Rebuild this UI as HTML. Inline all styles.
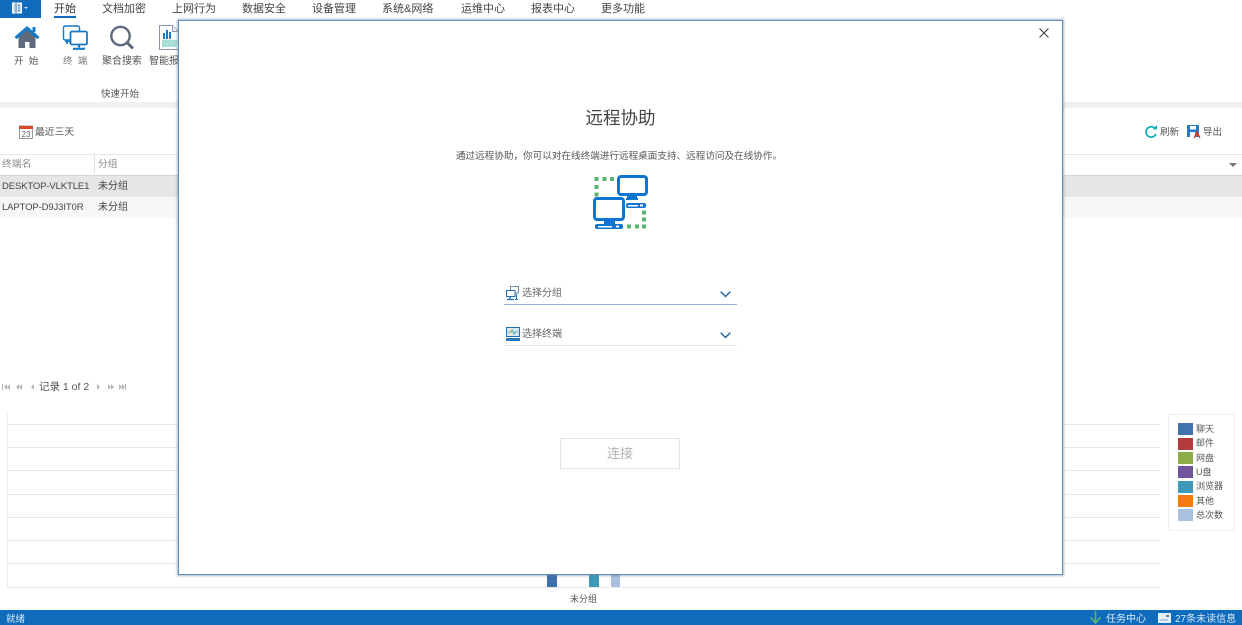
<!DOCTYPE html>
<html lang="zh-CN">
<head>
<meta charset="utf-8">
<title>远程协助</title>
<style>
html,body{margin:0;padding:0;width:1242px;height:625px;overflow:hidden;background:#fff}
body{position:relative;font-family:"Liberation Sans","Noto Sans CJK SC",sans-serif;color:#444;filter:blur(.3px)}
.a{position:absolute}
.t{position:absolute;white-space:nowrap;line-height:14px}
.tab{top:2px;font-size:11px;color:#444}
.rb{top:55px;font-size:10px;color:#555}
.h{position:absolute;left:7px;width:1153px;height:1px;background:#e9e9e9}
.sw{position:absolute;left:1178px;width:15px;height:12px}
.lg{left:1196px;font-size:9px;color:#555}
</style>
</head>
<body>
<!-- top bar -->
<div class="a" style="left:0;top:0;width:41px;height:18px;background:#0f6cbd"></div>
<svg class="a" style="left:11px;top:2px" width="20" height="12" viewBox="0 0 20 12"><rect x="1.500" y="1" width="9" height="10" fill="#cfe2f3" stroke="#fff"/><path d="M5 1v10M7 3.500h2M7 6h2M7 8.500h2" stroke="#3a80bd"/><path d="M13 5l2 2 2-2z" fill="#cfe2f3"/></svg>
<div class="t tab" style="left:54px;color:#333">开始</div>
<div class="a" style="left:54px;top:16px;width:22px;height:2px;background:#0f6cbd"></div>
<div class="t tab" style="left:102px">文档加密</div>
<div class="t tab" style="left:172px">上网行为</div>
<div class="t tab" style="left:242px">数据安全</div>
<div class="t tab" style="left:312px">设备管理</div>
<div class="t tab" style="left:382px">系统&amp;网络</div>
<div class="t tab" style="left:461px">运维中心</div>
<div class="t tab" style="left:531px">报表中心</div>
<div class="t tab" style="left:601px">更多功能</div>

<!-- ribbon icons -->
<svg class="a" style="left:14px;top:25px" width="26" height="24" viewBox="0 0 26 24"><path d="M4.500 11.500V23h6.500v-6h4.500v6h6V11.500L13 4.500z" fill="#5f6b7d"/><path d="M1.500 13 13 3l11.500 10" fill="none" stroke="#1878c8" stroke-width="3"/><rect x="18.500" y="2" width="3" height="5" fill="#1878c8"/></svg>
<svg class="a" style="left:62px;top:25px" width="27" height="26" viewBox="0 0 27 26" fill="none" stroke="#1878c8"><rect x="1.500" y="1" width="16" height="14" rx="1.500" stroke-width="1.400"/><rect x="8.500" y="6.500" width="16.500" height="13" rx="1.500" fill="#fff" stroke-width="1.800"/><path d="M17 19.500v3M11 23.800h12" stroke-width="2.200"/><path d="M3 16.500h5M5 15v4" stroke-width="1.600"/></svg>
<svg class="a" style="left:109px;top:25px" width="26" height="25" viewBox="0 0 26 25" fill="none" stroke="#5f6b7d"><circle cx="11.500" cy="11" r="9.200" stroke-width="2.400"/><path d="M18 17.500l6 6" stroke-width="3"/></svg>
<svg class="a" style="left:159px;top:25px" width="20" height="25" viewBox="0 0 20 25"><path d="M.5.500h13l6 6v18H.5z" fill="#fff" stroke="#8b97a5"/><path d="M13.500.500v6h6" fill="#eef" stroke="#8b97a5"/><rect x="4" y="8" width="2" height="6" fill="#1878c8"/><rect x="7" y="5" width="2" height="9" fill="#1878c8"/><rect x="10" y="7" width="2" height="7" fill="#1878c8"/><rect x="3" y="15" width="15" height="7" fill="#a8e0d8"/></svg>
<div class="t rb" style="left:14px;font-size:9.500px">开&nbsp;&nbsp;始</div>
<div class="t rb" style="left:63px;color:#777;font-size:9.500px">终&nbsp;&nbsp;端</div>
<div class="t rb" style="left:102px">聚合搜索</div>
<div class="t rb" style="left:149px">智能报表</div>
<div class="t rb" style="left:101px;top:88px;font-size:9.500px">快速开始</div>
<div class="a" style="left:0;top:102px;width:1242px;height:6px;background:#f1f1f1"></div>

<!-- toolbar -->
<svg class="a" style="left:19px;top:125px" width="14" height="14" viewBox="0 0 14 14"><rect x=".5" y="1" width="13" height="12.500" fill="#fff" stroke="#999"/><rect x="0" y="1" width="14" height="3" fill="#d9472b"/><text x="7" y="12" font-size="8" text-anchor="middle" fill="#666" font-family="Liberation Sans">23</text></svg>
<div class="t" style="left:35px;top:125px;font-size:9.800px;color:#555;margin-top:1px">最近三天</div>
<svg class="a" style="left:1144px;top:125px" width="14" height="14" viewBox="0 0 14 14" fill="none"><path d="M11.500 4A5.200 5.200 0 1 0 12 9" stroke="#14aeb4" stroke-width="1.800"/><path d="M8.500 4.500h4.500V0z" fill="#14aeb4"/></svg>
<div class="t" style="left:1160px;top:126px;font-size:9.500px;color:#555">刷新</div>
<svg class="a" style="left:1187px;top:125px" width="14" height="14" viewBox="0 0 14 14"><rect x="0" y="0" width="12" height="12" fill="#2a78c2"/><rect x="3" y="1" width="6" height="3.500" fill="#fff"/><rect x="3" y="7" width="5" height="5" fill="#fff"/><path d="M7 13l3-6 3 6M8.500 10.500h3" fill="none" stroke="#d9382b" stroke-width="1.300"/></svg>
<div class="t" style="left:1203px;top:126px;font-size:9.500px;color:#555">导出</div>

<!-- table -->
<div class="a" style="left:0;top:154px;width:1242px;height:1px;background:#e8e8e8"></div>
<div class="t" style="left:2px;top:158px;font-size:9.800px;color:#888">终端名</div>
<div class="a" style="left:94px;top:155px;width:1px;height:18px;background:#ddd"></div>
<div class="t" style="left:98px;top:158px;font-size:9.800px;color:#888">分组</div>
<div class="a" style="left:1229px;top:163px;border:4px solid transparent;border-top:4px solid #777;border-bottom:0"></div>
<div class="a" style="left:0;top:175px;width:1242px;height:22px;background:#e6e6e6;border-top:1px solid #d4d4d4;box-sizing:border-box"></div>
<div class="a" style="left:0;top:197px;width:1242px;height:21px;background:#f7f7f7"></div>
<div class="t" style="left:2px;top:180px;font-size:9.500px;letter-spacing:-.12px">DESKTOP-VLKTLE1</div>
<div class="t" style="left:98px;top:180px;font-size:10px">未分组</div>
<div class="t" style="left:2px;top:201px;font-size:9.500px;letter-spacing:-.12px">LAPTOP-D9J3IT0R</div>
<div class="t" style="left:98px;top:201px;font-size:10px">未分组</div>

<!-- pager -->
<svg class="a" style="left:2px;top:384px" width="42" height="7" viewBox="0 0 42 7" fill="#b5b5b5"><path d="M0 0h1v6H0zM5 0v6L2 3zM8 0v6L5 3z"/><path d="M17 0v6l-3-3zM20 0v6l-3-3zM32 0v6l-3-3z"/></svg>
<div class="t" style="left:39px;top:380px;font-size:10.500px;color:#555">记录 1 of 2</div>
<svg class="a" style="left:97px;top:384px" width="32" height="7" viewBox="0 0 32 7" fill="#b5b5b5"><path d="M0 0v6l3-3zM11 0v6l3-3zM14 0v6l3-3zM22 0v6l3-3zM25 0v6l3-3zM28 0h1v6h-1z"/></svg>

<!-- chart -->
<div class="a" style="left:7px;top:414px;width:1px;height:173px;background:#ebebeb"></div>
<div class="h" style="top:424px"></div><div class="h" style="top:447px"></div><div class="h" style="top:470px"></div><div class="h" style="top:494px"></div><div class="h" style="top:517px"></div><div class="h" style="top:540px"></div><div class="h" style="top:563px"></div><div class="h" style="top:587px"></div>
<div class="a" style="left:547px;top:570px;width:10px;height:17px;background:#3e6fae"></div>
<div class="a" style="left:589px;top:570px;width:10px;height:17px;background:#3a9ab8"></div>
<div class="a" style="left:611px;top:570px;width:9px;height:17px;background:#a9c0e0"></div>
<div class="t" style="left:570px;top:592px;font-size:9px;color:#555">未分组</div>

<!-- legend -->
<div class="a" style="left:1168px;top:414px;width:65px;height:115px;border:1px solid #efefef"></div>
<div class="sw" style="top:423px;background:#4272ad"></div><div class="t lg" style="top:422px">聊天</div>
<div class="sw" style="top:438px;background:#b23c3c"></div><div class="t lg" style="top:436px">邮件</div>
<div class="sw" style="top:452px;background:#8bac46"></div><div class="t lg" style="top:451px">网盘</div>
<div class="sw" style="top:466px;background:#70539b"></div><div class="t lg" style="top:465px">U盘</div>
<div class="sw" style="top:481px;background:#3c9ab8"></div><div class="t lg" style="top:479px">浏览器</div>
<div class="sw" style="top:495px;background:#f57a0e"></div><div class="t lg" style="top:494px">其他</div>
<div class="sw" style="top:509px;background:#a9c0e0"></div><div class="t lg" style="top:508px">总次数</div>

<!-- status bar -->
<div class="a" style="left:0;top:610px;width:1242px;height:15px;background:#0f6cbd"></div>
<div class="t" style="left:6px;top:613px;font-size:9.500px;color:#dce9f5">就绪</div>
<svg class="a" style="left:1089px;top:611px" width="13" height="14" viewBox="0 0 13 14" fill="none" stroke="#62b56a" stroke-width="1.500"><path d="M6.500 0v12M1.500 6l5 6 5-6"/></svg>
<div class="t" style="left:1106px;top:613px;font-size:10px;color:#dce9f5">任务中心</div>
<svg class="a" style="left:1158px;top:613px" width="13" height="10" viewBox="0 0 13 10"><rect width="13" height="10" fill="#e6eef6"/><rect x="8" y="2" width="3" height="2" fill="#5a7fa6"/><path d="M2 7h8" stroke="#8aa6c2"/></svg>
<div class="t" style="left:1175px;top:613px;font-size:10px;color:#dce9f5">27条未读信息</div>

<!-- modal -->
<div class="a" style="left:178px;top:20px;width:883px;height:553px;background:#fff;border:1px solid #5f8fbd;box-shadow:0 0 2px 1px rgba(90,120,150,.5)"></div>
<svg class="a" style="left:1039px;top:28px" width="10" height="10" viewBox="0 0 10 10" stroke="#444" stroke-width="1.100"><path d="M.5.500l9 9M9.500.500l-9 9"/></svg>
<div class="t" style="left:0;width:1241px;text-align:center;top:108px;line-height:20px;font-size:17.500px;color:#444">远程协助</div>
<div class="t" style="left:0;width:1238px;text-align:center;top:150px;font-size:9.600px;color:#555">通过远程协助，你可以对在线终端进行远程桌面支持、远程访问及在线协作。</div>

<!-- big icon -->
<svg class="a" style="left:590px;top:172px" width="62" height="62" viewBox="0 0 62 62">
<g fill="#5cb46a"><rect x="4.500" y="5" width="4" height="4"/><rect x="12.500" y="5" width="4" height="4"/><rect x="20" y="5" width="4" height="4"/><rect x="4.500" y="13" width="4" height="4"/><rect x="4.500" y="20.500" width="4" height="4"/><rect x="52" y="38.500" width="4" height="4"/><rect x="52" y="45.500" width="4" height="4"/><rect x="52" y="52.500" width="4" height="4"/><rect x="37" y="52.500" width="4" height="4"/><rect x="45" y="52.500" width="4" height="4"/></g>
<g fill="#fff" stroke="#0f75d1" stroke-width="3"><rect x="28.500" y="4.500" width="28" height="18" rx="2.500"/><rect x="4.500" y="26.500" width="29" height="21" rx="2.500"/></g>
<g fill="#0f75d1"><rect x="37" y="23" width="10" height="4"/><rect x="36" y="26" width="12" height="2"/><rect x="36" y="31" width="20" height="5" rx="2"/><rect x="14" y="49" width="11" height="3"/><rect x="5" y="52" width="28" height="5" rx="2"/></g>
<g fill="#fff"><rect x="38" y="33" width="10" height="1.500"/><rect x="50" y="32.500" width="3" height="2"/><rect x="8" y="54" width="14" height="1.500"/><rect x="26" y="53.500" width="3" height="2"/></g>
</svg>

<!-- selects -->
<svg class="a" style="left:505px;top:286px" width="15" height="15" viewBox="0 0 15 15" fill="none" stroke="#1d6fb8"><rect x="5.500" y=".5" width="8" height="6.500" fill="#fff" stroke="#7a8b9c"/><rect x="1.500" y="4.500" width="8.500" height="6" fill="#fff"/><path d="M2 13.500h7M5 11v2" stroke-width="1.200"/><path d="M11.500 8v5M10 13.500h3"/></svg>
<div class="t" style="left:522px;top:287px;font-size:10px;color:#666">选择分组</div>
<svg class="a" style="left:720px;top:291px" width="11" height="7" viewBox="0 0 11 7" fill="none" stroke="#2d6a9c" stroke-width="1.500"><path d="M.7.700l4.800 4.800L10.300.7"/></svg>
<div class="a" style="left:504px;top:304px;width:233px;height:1px;background:#8fb3d6"></div>
<svg class="a" style="left:506px;top:327px" width="14" height="15" viewBox="0 0 14 15"><rect x=".5" y=".5" width="13" height="9" fill="#d8e9f5" stroke="#1d6fb8"/><path d="M2 5h3l1-2 2 4 1-2h3" fill="none" stroke="#2fa08a" stroke-width=".8"/><rect x="0" y="11" width="14" height="3" fill="#2d77bb"/></svg>
<div class="t" style="left:522px;top:328px;font-size:10px;color:#666">选择终端</div>
<svg class="a" style="left:720px;top:332px" width="11" height="7" viewBox="0 0 11 7" fill="none" stroke="#2d6a9c" stroke-width="1.500"><path d="M.7.700l4.800 4.800L10.300.7"/></svg>
<div class="a" style="left:504px;top:345px;width:233px;height:1px;background:#e4e4e4"></div>

<!-- connect button -->
<div class="a" style="left:560px;top:438px;width:118px;height:29px;border:1px solid #e2e2e2;text-align:center;font-size:13px;line-height:29px;color:#b4b4b4">连接</div>
</body>
</html>
